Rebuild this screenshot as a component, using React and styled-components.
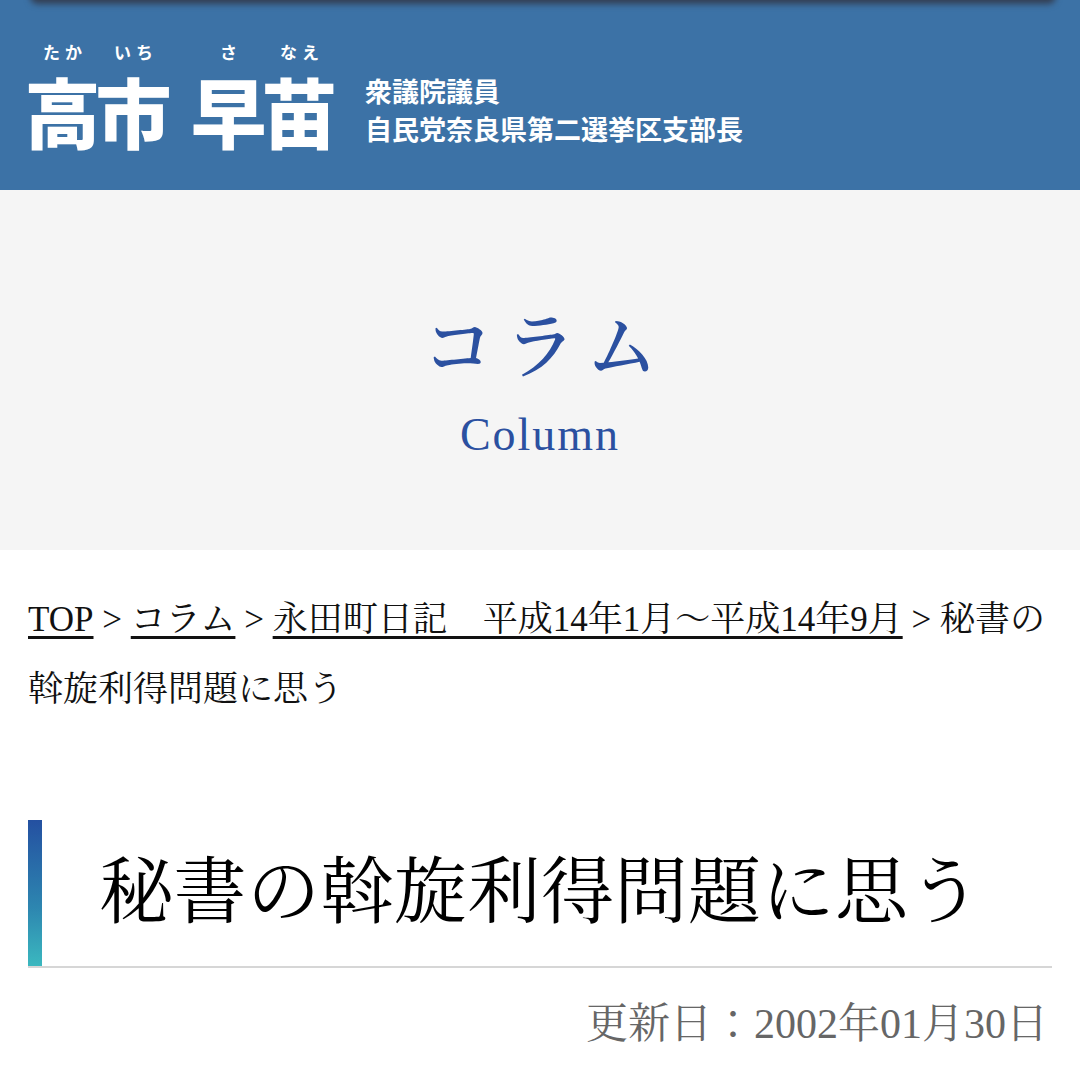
import React from "react";
import styled, { createGlobalStyle } from "styled-components";

const SERIF = `"Liberation Serif", "Noto Serif CJK JP", "Noto Sans CJK JP", serif`;
const GOTHIC = `"Noto Sans CJK JP", "Noto Sans", sans-serif`;

const GlobalStyle = createGlobalStyle`
  html, body { margin: 0; padding: 0; background: #ffffff; }
  body { font-family: ${SERIF}; color: #111; }
  * { box-sizing: border-box; }
`;

const Page = styled.div`
  position: relative;
  width: 1080px;
  overflow: hidden;
`;

const TopShadow = styled.div`
  position: absolute;
  top: -12px;
  left: 30px;
  right: 24px;
  height: 16px;
  border-radius: 8px;
  background: #333e52;
  filter: blur(3px);
  z-index: 2;
`;

const Header = styled.header`
  height: 190px;
  background: #3c72a6;
  display: flex;
  align-items: flex-end;
  padding: 0 0 42px 27px;
  color: #ffffff;
  font-family: ${GOTHIC};
`;

const Name = styled.div`
  display: flex;
  align-items: flex-end;
  gap: 24px;
`;

const Word = styled.div`
  display: flex;
`;

const CharBox = styled.div`
  display: flex;
  flex-direction: column;
  align-items: center;
  width: 71px;
`;

const Kana = styled.span`
  font-size: 17px;
  line-height: 20px;
  font-weight: 700;
  letter-spacing: 5px;
  padding-left: 5px;
  margin-bottom: 10px;
  white-space: nowrap;
`;

const Kanji = styled.span`
  font-size: 76px;
  line-height: 76px;
  font-weight: 900;
`;

const Titles = styled.div`
  display: flex;
  flex-direction: column;
  margin-left: 30px;
  margin-bottom: 0;
`;

const TitleLine = styled.span`
  font-size: 27px;
  line-height: 38px;
  font-weight: 700;
  white-space: nowrap;
`;

const Hero = styled.section`
  height: 360px;
  background: #f5f5f5;
  display: flex;
  flex-direction: column;
  align-items: center;
  padding-top: 122px;
`;

const HeroTitle = styled.h2`
  margin: 0;
  font-family: ${SERIF};
  font-weight: 500;
  font-size: 72px;
  line-height: 72px;
  letter-spacing: 10px;
  padding-left: 10px;
  color: #2b50a0;
`;

const HeroSub = styled.div`
  margin-top: 26px;
  font-family: ${SERIF};
  font-size: 46px;
  line-height: 50px;
  letter-spacing: 2px;
  color: #2b50a0;
`;

const Crumbs = styled.nav`
  margin-top: 35px;
  padding: 0 28px;
  font-size: 35px;
  line-height: 70px;
  color: #111;
`;

const CrumbLink = styled.a`
  color: #111;
  text-decoration: underline;
  text-decoration-thickness: 3px;
  text-underline-offset: 5px;
`;

const Sep = styled.span`
  margin: 0 0.25em;
`;

const HeadingBox = styled.div`
  margin: 95px 28px 0;
  display: flex;
  align-items: center;
  border-bottom: 2px solid #d6d6d6;
`;

const Bar = styled.div`
  width: 14px;
  height: 146px;
  flex-shrink: 0;
  background: linear-gradient(to bottom, #2450a1, #2d86b0 60%, #3bb8bf);
`;

const Heading = styled.h1`
  margin: 0 0 0 58px;
  font-family: ${SERIF};
  font-weight: 400;
  font-size: 73px;
  line-height: 80px;
  letter-spacing: 0.5px;
  color: #000;
  white-space: nowrap;
`;

const DateLine = styled.div`
  margin-top: 26px;
  padding-right: 32px;
  text-align: right;
  font-size: 42px;
  line-height: 60px;
  color: #666;
`;

const nameWords = [
  [
    { kana: "たか", kanji: "高" },
    { kana: "いち", kanji: "市" },
  ],
  [
    { kana: "さ", kanji: "早" },
    { kana: "なえ", kanji: "苗" },
  ],
];

export default function App() {
  return (
    <Page>
      <GlobalStyle />
      <TopShadow />
      <Header>
        <Name>
          {nameWords.map((w, i) => (
            <Word key={i}>
              {w.map((c) => (
                <CharBox key={c.kanji}>
                  <Kana>{c.kana}</Kana>
                  <Kanji>{c.kanji}</Kanji>
                </CharBox>
              ))}
            </Word>
          ))}
        </Name>
        <Titles>
          <TitleLine>衆議院議員</TitleLine>
          <TitleLine>自民党奈良県第二選挙区支部長</TitleLine>
        </Titles>
      </Header>
      <Hero>
        <HeroTitle>コラム</HeroTitle>
        <HeroSub>Column</HeroSub>
      </Hero>
      <Crumbs>
        <CrumbLink href="#">TOP</CrumbLink>
        <Sep>&gt;</Sep>
        <CrumbLink href="#">コラム</CrumbLink>
        <Sep>&gt;</Sep>
        <CrumbLink href="#">永田町日記　平成14年1月〜平成14年9月</CrumbLink>
        <Sep>&gt;</Sep>
        秘書の斡旋利得問題に思う
      </Crumbs>
      <HeadingBox>
        <Bar />
        <Heading>秘書の斡旋利得問題に思う</Heading>
      </HeadingBox>
      <DateLine>更新日：2002年01月30日</DateLine>
    </Page>
  );
}
